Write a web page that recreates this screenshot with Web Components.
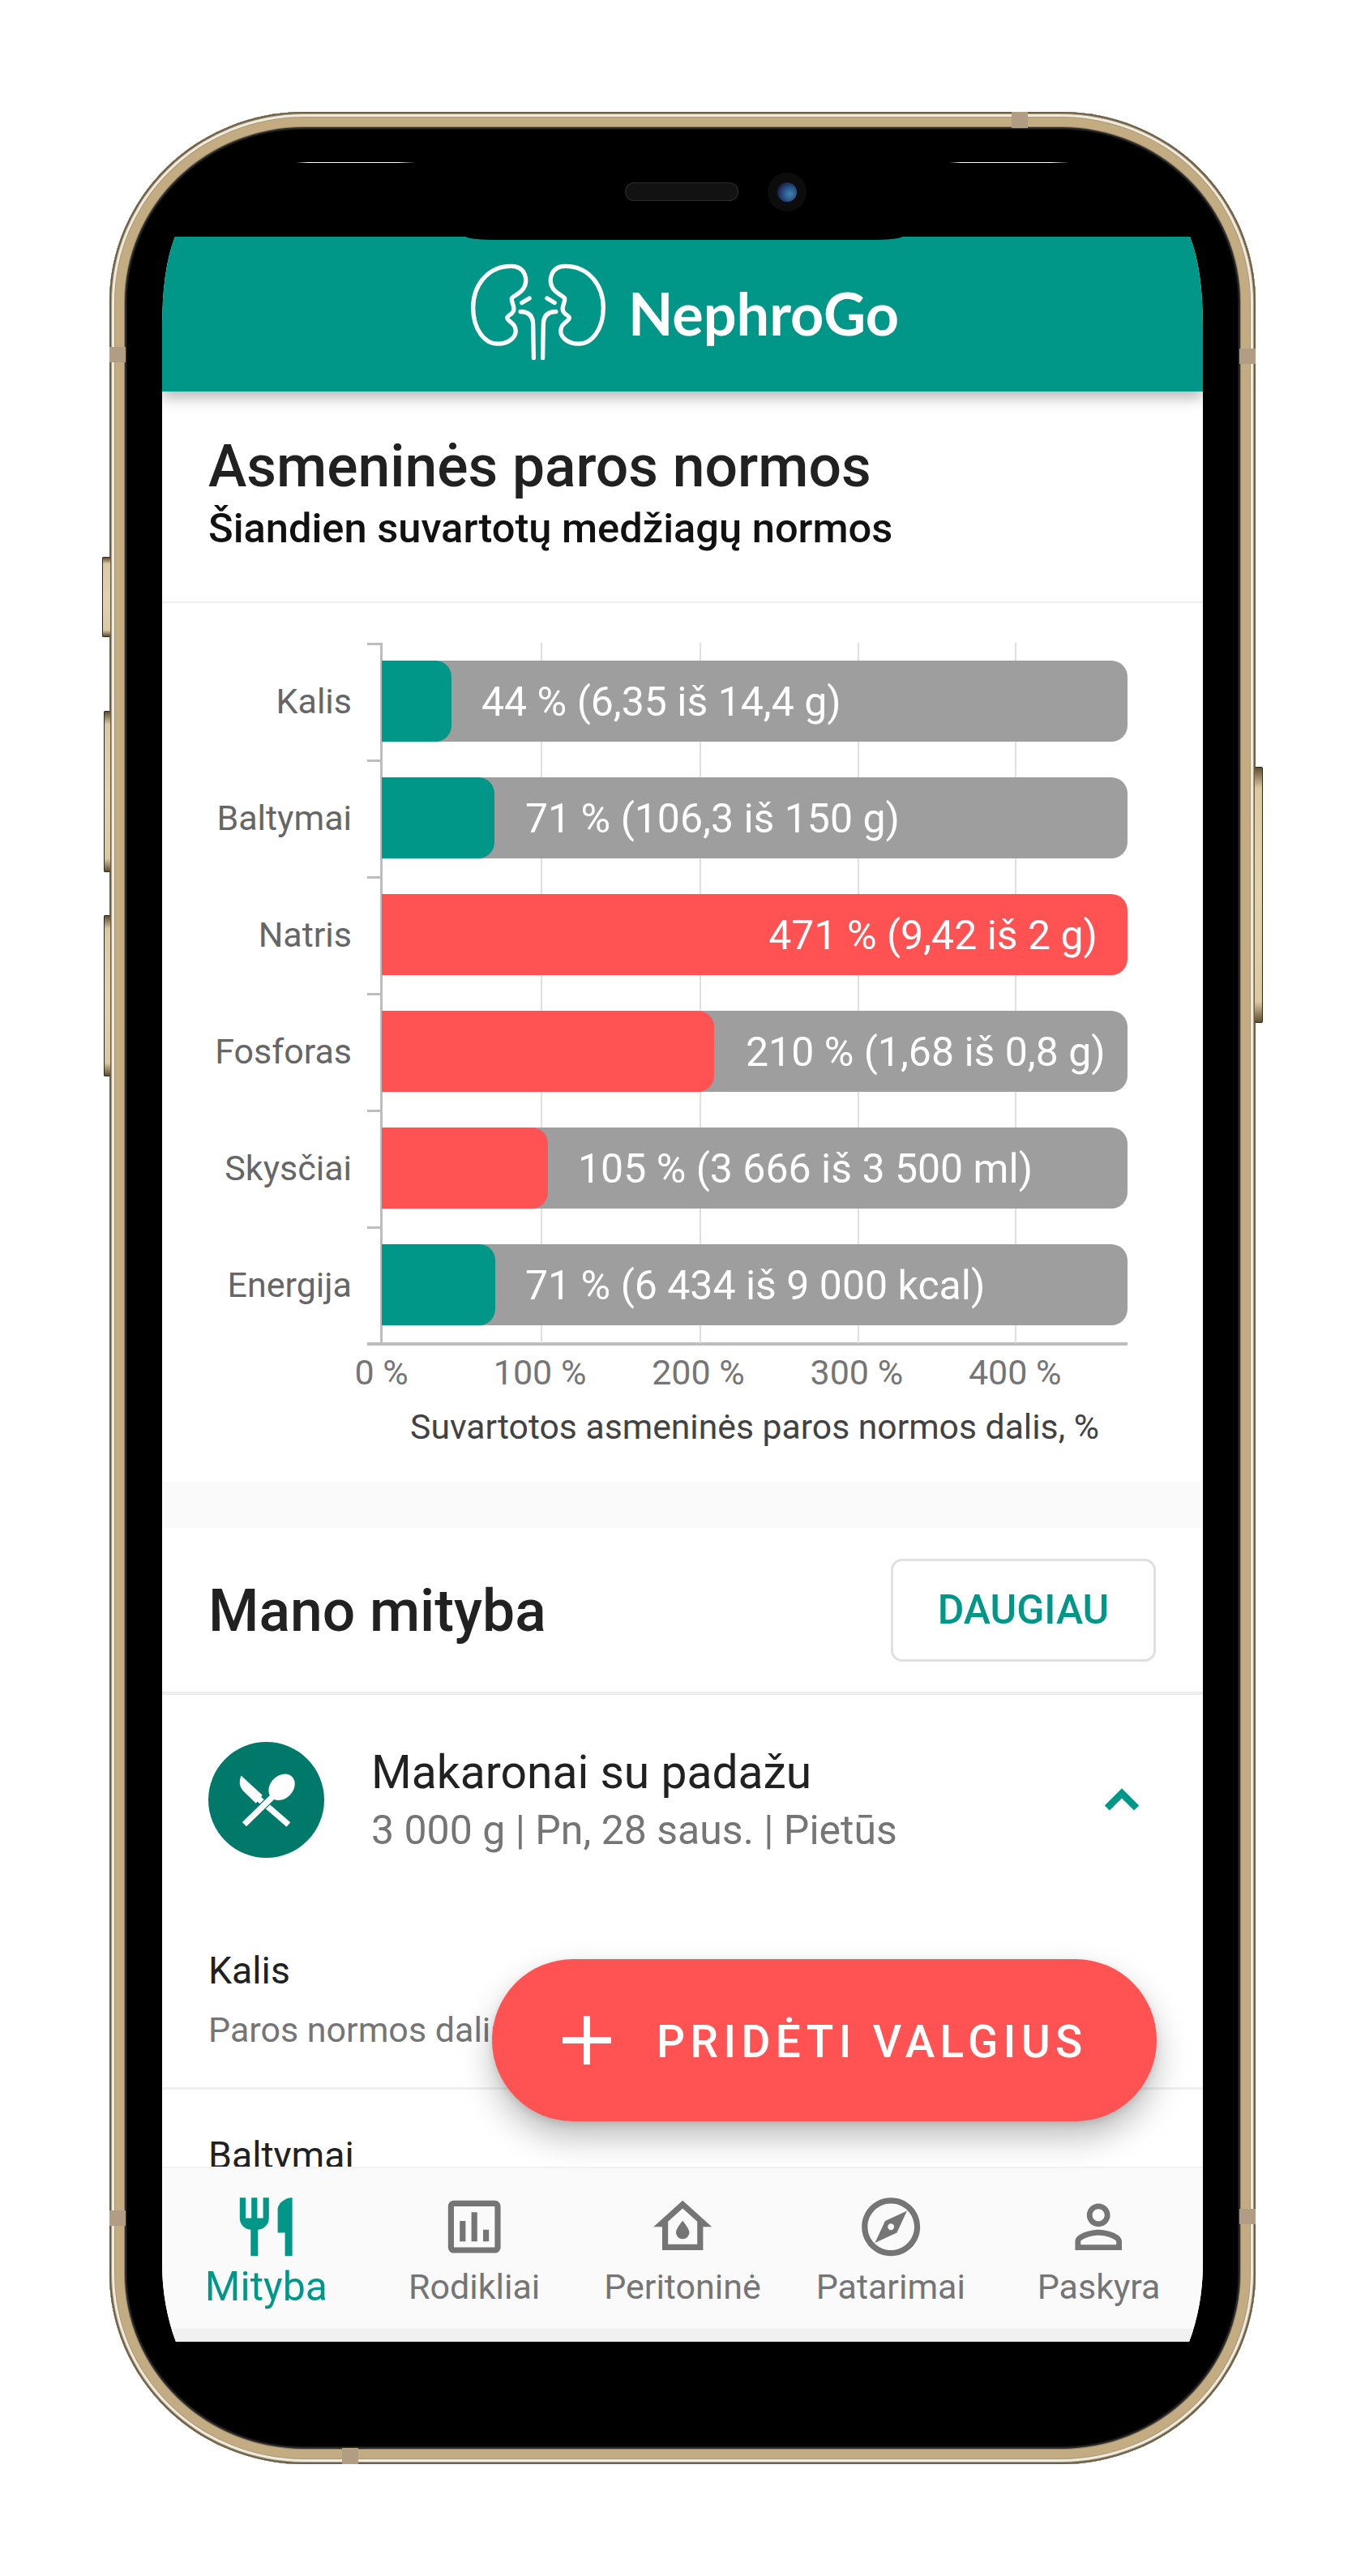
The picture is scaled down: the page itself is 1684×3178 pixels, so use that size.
<!DOCTYPE html>
<html lang="lt"><head><meta charset="utf-8"><title>NephroGo</title>
<style>html,body{margin:0;padding:0;background:#fff;font-family:Roboto,sans-serif}</style></head>
<body>
<phone-frame>
<app-screen>
  <app-header slot="top">NephroGo</app-header>
  <section-title>Asmeninės paros normos<span slot="sub">Šiandien suvartotų medžiagų normos</span></section-title>
  <norm-chart>
    <chart-row style="--w:86px;--c:#009688;--p:37px"><span slot="label">Kalis</span>44 % (6,35 iš 14,4 g)</chart-row>
    <chart-row style="--w:139px;--c:#009688;--p:38px"><span slot="label">Baltymai</span>71 % (106,3 iš 150 g)</chart-row>
    <chart-row over style="--w:0px;--c:#FF5252;--p:0px"><span slot="label">Natris</span>471 % (9,42 iš 2 g)</chart-row>
    <chart-row style="--w:410px;--c:#FF5252;--p:39px"><span slot="label">Fosforas</span>210 % (1,68 iš 0,8 g)</chart-row>
    <chart-row style="--w:205px;--c:#FF5252;--p:37px"><span slot="label">Skysčiai</span>105 % (3 666 iš 3 500 ml)</chart-row>
    <chart-row style="--w:140px;--c:#009688;--p:37px"><span slot="label">Energija</span>71 % (6 434 iš 9 000 kcal)</chart-row>
  </norm-chart>
  <nutrition-head>Mano mityba<span slot="action">DAUGIAU</span></nutrition-head>
  <meal-row>Makaronai su padažu<span slot="sub">3 000 g | Pn, 28 saus. | Pietūs</span></meal-row>
  <nutrient-row>Kalis<span slot="sub">Paros normos dalis</span></nutrient-row>
  <nutrient-row>Baltymai<span slot="sub">Paros normos dalis</span></nutrient-row>
  <add-fab slot="over">PRIDĖTI VALGIUS</add-fab>
  <bottom-nav slot="bottom">
    <nav-item active icon="food">Mityba</nav-item>
    <nav-item icon="chart">Rodikliai</nav-item>
    <nav-item icon="home">Peritoninė</nav-item>
    <nav-item icon="compass">Patarimai</nav-item>
    <nav-item icon="person">Paskyra</nav-item>
  </bottom-nav>
</app-screen>
</phone-frame>
<script>
const def=(name,css,html)=>customElements.define(name,class extends HTMLElement{
  constructor(){super();this.attachShadow({mode:'open'}).innerHTML=`<style>${css}</style>${html}`;}
});
def('phone-frame',`
:host{display:block;position:relative;box-sizing:border-box;width:1414px;height:2902px;margin:138px 0 0 135px;padding:154px 0 0 65px;background:#000;border-radius:240px/235px;
box-shadow:inset 0 0 0 2px #6e6048,inset 0 0 0 3px #a89b80,inset 0 0 0 6px #f0ebdd,inset 0 0 0 7px #a9987a,inset 0 0 0 18px #c3ac82,inset 0 0 0 19px #8f8166,inset 0 0 0 21px #2a2a2a,inset 0 0 0 22px #111}
.band{position:absolute;background:#b09d84}
.l,.r{width:20px;height:19px}.l{left:0}.r{right:0}
.t,.b{width:20px;height:20px}
.hair{position:absolute;top:62px;height:1px;background:linear-gradient(90deg,#fff0,#fff 10%,#fff 85%,#fff0)}
.notch{position:absolute;left:439px;top:120px;width:540px;height:38px;background:#000;border-radius:0 0 34px 34px/0 0 5px 5px}
.speaker{position:absolute;left:636px;top:87px;width:140px;height:23px;border-radius:12px;background:#121212;box-shadow:inset 0 0 0 1px #2b2b2b}
.cam{position:absolute;left:812px;top:75px;width:48px;height:48px;border-radius:50%;background:#0c0c0c}
.lens{position:absolute;left:12px;top:12px;width:24px;height:24px;border-radius:50%;background:radial-gradient(circle at 65% 60%,#3f86ad 0,#264a80 45%,#15183a 80%)}
.btn{position:absolute;box-sizing:border-box;border:1px solid #2b2620;background:linear-gradient(#5f4f33,#dcc9a2 8%,#e2d3ad 50%,#dcc9a2 92%,#5f4f33);border-radius:2px}
.ml{left:-9px;width:10px;border-right:0}.mr{right:-9px;width:10px;border-left:0}
`,`
<slot></slot>
<div class="band l" style="top:290px"></div><div class="band r" style="top:292px"></div>
<div class="band l" style="top:2589px"></div><div class="band r" style="top:2587px"></div>
<div class="band t" style="left:1113px;top:0"></div><div class="band b" style="left:287px;bottom:0"></div>
<div class="hair" style="left:230px;width:148px"></div><div class="hair" style="left:1036px;width:148px"></div>
<div class="notch"></div><div class="speaker"></div><div class="cam"><div class="lens"></div></div>
<div class="btn ml" style="left:-9px;width:10px;top:549px;height:99px"></div>
<div class="btn ml" style="left:-7px;width:8px;top:739px;height:199px"></div>
<div class="btn ml" style="left:-7px;width:8px;top:991px;height:199px"></div>
<div class="btn mr" style="top:808px;height:316px"></div>
`);
def('app-screen',`
:host{display:block;position:relative;width:1284px;height:2597px;background:#fff;
clip-path:path('M16 0H1268Q1284 40 1284 112V2500Q1284 2552 1267 2597H17Q0 2552 0 2500V112Q0 40 16 0Z');
display:flex;flex-direction:column;color:#212121}
.body{flex:1;min-height:0;overflow:hidden;display:block}
::slotted([slot=over]){position:absolute;right:57px;bottom:272px}
`,`<slot name="top"></slot><div class="body"><slot></slot></div><slot name="bottom"></slot><slot name="over"></slot>`);
def('app-header',`
:host{display:flex;position:relative;z-index:2;box-sizing:border-box;padding-left:6px;align-items:center;justify-content:center;gap:28px;height:191px;background:#009688;color:#fff;font:700 72px Lato,sans-serif;box-shadow:0 8px 16px rgba(0,0,0,.28)}
svg{display:block;width:166px;height:119px;margin-top:-6px}
span{display:block;margin-top:-4px}
`,`<svg viewBox="30 25 502 360" fill="none" stroke="#fff" stroke-width="16" stroke-linecap="round" stroke-linejoin="round" aria-hidden="true">
<g id="k"><path d="M180 35C90 35 38 110 38 190C38 270 80 325 130 325C175 325 205 295 195 265C190 245 165 240 165 228C165 218 190 215 190 195C190 180 180 168 182 155C185 148 210 140 225 120C245 90 235 35 180 35Z"/>
<path d="M220 172L248 155M215 205C250 205 262 225 262 255L264 378"/></g>
<g transform="translate(562 0) scale(-1 1)"><path d="M180 35C90 35 38 110 38 190C38 270 80 325 130 325C175 325 205 295 195 265C190 245 165 240 165 228C165 218 190 215 190 195C190 180 180 168 182 155C185 148 210 140 225 120C245 90 235 35 180 35Z"/>
<path d="M220 172L248 155M215 205C250 205 262 225 262 255L264 378"/></g></svg><span><slot></slot></span>`);
def('section-title',`
:host{display:block;box-sizing:border-box;height:261px;padding:53px 57px 0;border-bottom:2px solid #eeeeee}
.t{font:500 71.4px/80px Roboto,sans-serif;color:#212121}
.s{font:500 50.6px/58px Roboto,sans-serif;color:#111;margin-top:7px}
`,`<div class="t"><slot></slot></div><div class="s"><slot name="sub"></slot></div>`);
def('norm-chart',`
:host{display:block;box-sizing:border-box;height:1084px;padding-top:49px;font-family:Roboto,sans-serif}
.axis{width:938px;height:4px;margin:-1px 0 0 253px;background:#bdbdbd}
.ticks{display:flex;margin:7px 0 0 173px;font-size:43px;line-height:52px;color:#757575}
.ticks span{flex:0 0 195.4px;text-align:center}
.title{margin:15px 0 0 271px;width:920px;text-align:center;font-size:42.7px;line-height:52px;color:#424242;white-space:nowrap}
`,`<slot></slot><div class="axis"></div>
<div class="ticks"><span>0 %</span><span>100 %</span><span>200 %</span><span>300 %</span><span>400 %</span></div>
<div class="title">Suvartotos asmeninės paros normos dalis, %</div>`);
def('chart-row',`
:host{display:grid;grid-template-columns:234px 19px 18px 920px;height:144px;font-family:Roboto,sans-serif}
.lab{grid-column:1;align-self:center;text-align:right;font-size:43px;color:#666}
.tick{grid-column:3;height:3px;background:#bdbdbd;width:18px}
.plot{grid-column:4;box-sizing:border-box;border-left:3px solid #bdbdbd;margin-left:-2px;width:922px;padding:22px 0;
background-image:linear-gradient(#e0e0e0,#e0e0e0),linear-gradient(#e0e0e0,#e0e0e0),linear-gradient(#e0e0e0,#e0e0e0),linear-gradient(#e0e0e0,#e0e0e0);
background-size:2px 100%;background-repeat:no-repeat;background-position:195px 0,391px 0,586px 0,780px 0}
.bar{display:flex;align-items:center;height:100px;background:#9e9e9e;border-radius:0 20px 20px 0;margin-left:-1px;color:#fff;font-size:50px;white-space:nowrap}
.fill{flex:0 0 var(--w);height:100%;background:var(--c);border-radius:0 20px 20px 0}
.txt{padding-left:var(--p);padding-top:2px}
:host([over]) .bar{background:var(--c);justify-content:flex-end;padding-right:37px}
:host([over]) .fill{display:none}
`,`<div class="lab"><slot name="label"></slot></div><div class="tick"></div>
<div class="plot"><div class="bar"><div class="fill"></div><div class="txt"><slot></slot></div></div></div>`);
def('nutrition-head',`
:host{display:flex;align-items:center;justify-content:space-between;box-sizing:border-box;height:263px;padding:57px 58px 0 57px;background:linear-gradient(#fafafa 57px,#fff 57px);border-bottom:4px solid #eeeeee;font:500 71.4px Roboto,sans-serif;color:#212121}
.h{margin-top:3px}
.b{box-sizing:border-box;width:327px;height:127px;display:flex;align-items:center;justify-content:center;border:3px solid #e0e0e0;border-radius:14px;color:#009688;font:500 50px Roboto,sans-serif}
`,`<div class="h"><slot></slot></div><div class="b"><slot name="action"></slot></div>`);
def('meal-row',`
:host{display:flex;align-items:center;padding:58px 78px 58px 57px;font-family:Roboto,sans-serif}
.c{flex:none;width:143px;height:143px;margin-right:58px}
.m{flex:1}
.t{font-size:57px;line-height:66px;color:#212121}
.s{font-size:50px;line-height:60px;color:#757575;margin-top:8px}
svg{display:block}
`,`<svg class="c" viewBox="22 28 428 428" aria-hidden="true"><circle cx="236" cy="242" r="214" fill="#00796B"/>
<path d="M143 152L222 225L198 255L150 208Q130 185 143 152Z" fill="#fff"/><path d="M205 235L318 333" stroke="#fff" stroke-width="22" fill="none"/>
<path d="M265 225L155 332" stroke="#00796B" stroke-width="29" fill="none"/><path d="M268 222L155 332" stroke="#fff" stroke-width="22" fill="none"/>
<ellipse cx="293" cy="195" rx="42" ry="54" transform="rotate(45 293 195)" fill="#fff"/></svg>
<div class="m"><div class="t"><slot></slot></div><div class="s"><slot name="sub"></slot></div></div>
<svg width="44" height="30" viewBox="0 0 46 30" aria-hidden="true"><path d="M4 25L23 6L42 25" fill="none" stroke="#009688" stroke-width="9"/></svg>`);
def('nutrient-row',`
:host{display:block;box-sizing:border-box;height:228px;padding:53px 57px 0;border-bottom:3px solid #f0f0f0;font-family:Roboto,sans-serif}
.t{font-size:46.4px;line-height:56px;color:#212121}
.s{font-size:43px;line-height:56px;color:#757575;margin-top:17px;white-space:nowrap}
`,`<div class="t"><slot></slot></div><div class="s"><slot name="sub"></slot></div>`);
def('add-fab',`
:host{display:flex;align-items:center;box-sizing:border-box;width:820px;height:200px;padding-left:87px;gap:56px;border-radius:100px;background:#FF5252;color:#fff;font:500 55px Roboto,sans-serif;letter-spacing:6.4px;white-space:nowrap;box-shadow:0 20px 40px rgba(0,0,0,.26),0 4px 10px rgba(0,0,0,.1)}
svg{display:block;flex:none}
span{margin-top:3px}
`,`<svg width="60" height="60" viewBox="0 0 60 60" aria-hidden="true"><path d="M30 0V60M0 30H60" stroke="#fff" stroke-width="8"/></svg><span><slot></slot></span>`);
def('bottom-nav',`
:host{display:flex;box-sizing:border-box;height:216px;padding-top:29px;background:#fafafa;border-top:2px solid #f2f2f2;border-bottom:16px solid #f0f0f0;position:relative}
`,`<slot></slot>`);
const ICONS={
 food:'M11 9H9V2H7v7H5V2H3v7c0 2.12 1.66 3.84 3.75 3.97V22h2.5v-9.03C11.34 12.84 13 11.12 13 9V2h-2v7zm5-3v8h2.5v8H21V2c-2.76 0-5 2.24-5 4z',
 chart:'M19 3H5c-1.1 0-2 .9-2 2v14c0 1.1.9 2 2 2h14c1.1 0 2-.9 2-2V5c0-1.1-.9-2-2-2zm0 16H5V5h14v14zM7 10h2v7H7zm4-3h2v10h-2zm4 6h2v4h-2z',
 home:'M12 3L2 12h3v8h14v-8h3L12 3zm5 15H7v-7.81l5-4.5 5 4.5V18zM12 9.9c0 0-2.3 2.7-2.3 4a2.3 2.3 0 0 0 4.6 0c0-1.3-2.3-4-2.3-4z',
 compass:'M12 2C6.48 2 2 6.48 2 12s4.48 10 10 10 10-4.48 10-10S17.52 2 12 2zm0 18c-4.41 0-8-3.59-8-8s3.59-8 8-8 8 3.59 8 8-3.59 8-8 8zm-5.5-2.5l7.51-3.49L17.5 6.5 9.99 9.99 6.5 17.5zm5.5-6.6c.61 0 1.1.49 1.1 1.1s-.49 1.1-1.1 1.1-1.1-.49-1.1-1.1.49-1.1 1.1-1.1z',
 person:'M12 5.9c1.16 0 2.1.94 2.1 2.1s-.94 2.1-2.1 2.1S9.9 9.16 9.9 8s.94-2.1 2.1-2.1m0 9c2.97 0 6.1 1.46 6.1 2.1v1.1H5.9V17c0-.64 3.13-2.1 6.1-2.1M12 4C9.79 4 8 5.79 8 8s1.79 4 4 4 4-1.79 4-4-1.79-4-4-4zm0 9c-2.67 0-8 1.34-8 4v3h16v-3c0-2.66-5.33-4-8-4z'};
customElements.define('nav-item',class extends HTMLElement{
 constructor(){super();this.attachShadow({mode:'open'});}
 connectedCallback(){const a=this.hasAttribute('active');const c=a?'#009688':'#757575';
  this.shadowRoot.innerHTML=`<style>:host{flex:1;display:flex;flex-direction:column;align-items:center;font-family:Roboto,sans-serif;color:${c};font-size:${a?50:43}px;line-height:56px;white-space:nowrap}svg{display:block;width:86.4px;height:86.4px;margin-bottom:3px}</style><svg viewBox="0 0 24 24" fill="${c}" aria-hidden="true"><path fill-rule="evenodd" d="${ICONS[this.getAttribute('icon')]}"/></svg><div><slot></slot></div>`;}
});
</script>
</body></html>
